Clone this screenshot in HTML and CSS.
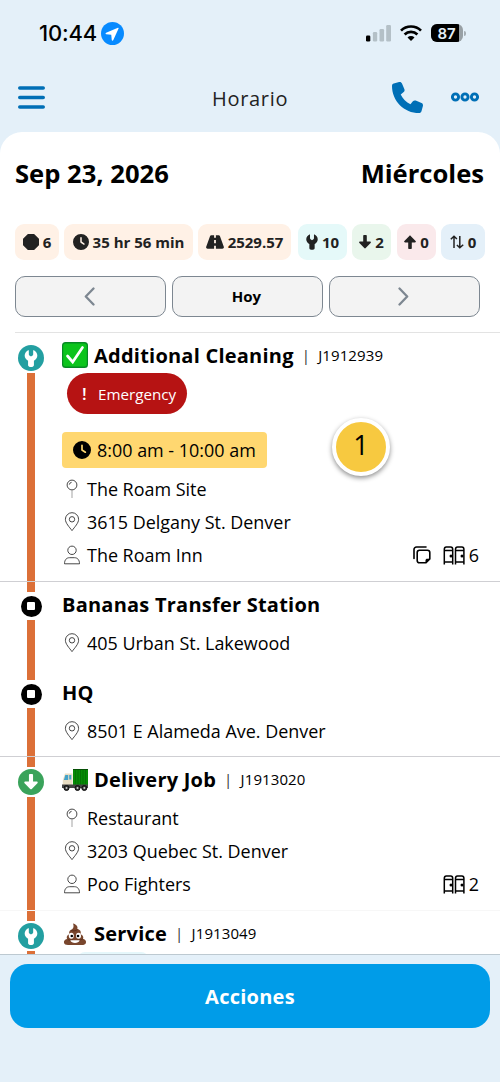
FILE: index.html
```html
<!DOCTYPE html>
<html lang="es">
<head>
<meta charset="utf-8">
<meta name="viewport" content="width=device-width, initial-scale=1">
<title>Horario</title>
<link rel="stylesheet" href="styles.css">
</head>
<body>
<svg class="defs" aria-hidden="true">
  <symbol id="clock" viewBox="0 0 512 512"><path d="M256 0a256 256 0 1 1 0 512A256 256 0 1 1 256 0zM232 120V256c0 8 4 15.5 10.7 20l96 64c11 7.4 25.9 4.4 33.3-6.7s4.4-25.9-6.7-33.3L280 243.2V120c0-13.3-10.7-24-24-24s-24 10.7-24 24z"/></symbol>
  <symbol id="wrench" viewBox="0 0 14 18"><path d="M4.700.6v4c0 .5.2.9.6 1.200l1.700 1.200 1.700-1.200c.4-.3.6-.7.6-1.200V.6c0-.4.4-.6.8-.3C12.200 1.500 13.700 3.500 13.700 5.800c0 2.400-1.500 4.500-3.600 5.500v4.700c0 1.100-.9 2-2 2H5.900c-1.100 0-2-.9-2-2v-4.700C1.800 10.300.3 8.200.3 5.800.3 3.500 1.800 1.500 3.900.3c.4-.3.8-.1.8.3z"/></symbol>
  <symbol id="arrow" viewBox="0 0 12 14"><path d="M4.200 1c0-.6.4-1 1-1h1.600c.6 0 1 .4 1 1v5.500h3.100c.9 0 1.300 1 .7 1.600l-4.900 5c-.4.4-1 .4-1.400 0l-4.900-5C-.2 7.500.2 6.500 1.100 6.500h3.100z"/></symbol>
  <symbol id="pushpin" viewBox="0 0 16 20"><g fill="none" stroke="#333" stroke-width=".9"><circle cx="8" cy="6" r="4.900"/><path d="M5.300 5.600A2.700 2.700 0 0 1 7.600 3.300"/><path d="M8 11v8" stroke="#999"/></g></symbol>
  <symbol id="marker" viewBox="0 0 16 20"><g fill="none" stroke="#333" stroke-width=".9"><path d="M8 18.600C5.300 15 1.400 11 1.400 7.300a6.600 6.600 0 0 1 13.200 0C14.600 11 10.700 15 8 18.600z"/><circle cx="8" cy="7.300" r="2.700"/></g></symbol>
  <symbol id="person" viewBox="0 0 16 20"><g fill="none" stroke="#333" stroke-width=".9"><circle cx="8" cy="5.300" r="4.200"/><path d="M.5 18.800c0-3.900 2-6.100 5-6.100h5c3 0 5 2.200 5 6.100z"/></g></symbol>
  <symbol id="doors" viewBox="0 0 22 19"><g fill="none" stroke="#000" stroke-width="1.500"><path d="M1.300 18.500V3.200c0-1.500.8-2.300 2-2.300h4.400c1.200 0 2 .8 2 2.300v15.300M1.300 4.600h8.400M1.300 16h8.400M12.500 18.500V3.200c0-1.500.8-2.300 2-2.300h4.400c1.200 0 2 .8 2 2.300v15.300M12.500 4.600h8.400M12.500 16h8.400"/></g><circle cx="8" cy="10" r="1.500"/><circle cx="19" cy="10" r="1.500"/></symbol>
  <symbol id="stack" viewBox="0 0 18 18"><g fill="none" stroke="#000" stroke-width="1.600" stroke-linecap="round"><path d="M1 12.500V3.500A2.500 2.500 0 0 1 3.500 1h9.500"/><path d="M6.500 4.200h8A2.300 2.300 0 0 1 16.800 6.500v6.300L13 16.700H6.500a2.300 2.300 0 0 1-2.300-2.300V6.500a2.300 2.300 0 0 1 2.300-2.300z"/></g><path d="M12.500 17v-2.600c0-1 .7-1.700 1.700-1.700H17z"/></symbol>
</svg>

<div class="screen">
  <div class="status">
    <span class="status-time">10:44</span>
    <svg class="status-location" viewBox="0 0 22 22"><circle cx="11" cy="11" r="11" fill="#078aff"/><path d="M16.200 5.500 4.900 10.300c-.8.4-.7 1.400.1 1.500l4.800.5.500 4.900c.1.800 1.100.9 1.500.1L16.800 6.200c.2-.5-.1-.9-.6-.7z" fill="#fff"/></svg>
    <svg class="status-signal" viewBox="0 0 25 17"><rect y="10.500" width="4.300" height="6" rx="1.200"/><g fill="#b4c0c7"><rect x="6.900" y="7" width="4.300" height="9.500" rx="1.200"/><rect x="13.500" y="4" width="4.600" height="12.500" rx="1.200"/><rect x="20.200" y="0" width="4.800" height="16.500" rx="1.200"/></g></svg>
    <svg class="status-wifi" viewBox="0 0 22 16"><g fill="none" stroke="#000" stroke-width="2.700"><path d="M1 5.600a14.300 14.300 0 0 1 20 0"/><path d="M4.600 9.500a9.200 9.200 0 0 1 12.800 0"/></g><path d="M11 16 7.500 12.500a5 5 0 0 1 7 0z"/></svg>
    <div class="battery"><span class="battery-level">87</span></div>
    <span class="battery-tip"></span>
  </div>

  <header class="header">
    <svg class="menu" viewBox="0 0 27 23" stroke="#006fb6" stroke-width="3.600" stroke-linecap="round"><path d="M1.800 2h23.400M1.800 11.500h23.400M1.800 21h23.400"/></svg>
    <h1 class="header-title">Horario</h1>
    <svg class="phone" viewBox="0 0 512 512" fill="#006fb6"><path d="M164.900 24.600c-7.700-18.600-28-28.500-47.400-23.200l-88 24C12.100 30.200 0 46 0 64C0 311.400 200.600 512 448 512c18 0 33.800-12.100 38.600-29.500l24-88c5.300-19.400-4.600-39.700-23.200-47.400l-96-40c-16.300-6.800-35.200-2.100-46.300 11.600L304.700 368C234.300 334.700 177.300 277.700 144 207.300L193.300 167c13.700-11.200 18.400-30 11.600-46.300l-40-96z"/></svg>
    <svg class="more" viewBox="0 0 28 10" fill="none" stroke="#006fb6" stroke-width="2.900"><circle cx="4.500" cy="5" r="3.100"/><circle cx="14" cy="5" r="3.100"/><circle cx="23.500" cy="5" r="3.100"/></svg>
  </header>

  <main class="sheet">
    <div class="date"><span>Sep 23, 2026</span><span>Miércoles</span></div>

    <div class="chips">
      <div class="chip chip-stops"><svg class="ico16" viewBox="0 0 16 16"><path d="M5.300 1h5.400L15 5.300v5.400L10.700 15H5.300L1 10.700V5.300z" stroke="#222" stroke-width="2" stroke-linejoin="round"/></svg>6</div>
      <div class="chip chip-time"><svg class="ico16"><use href="#clock"/></svg>35 hr 56 min</div>
      <div class="chip chip-miles"><svg class="ico-road" viewBox="0 0 18 14"><path d="M5.300.3H8.100V2.800h1.800V.3h2.800c.6 0 1 .3 1.200.8l3.900 10.600c.4 1.100-.3 2.100-1.400 2.100H9.900v-3H8.100v3H1.600C.5 13.800-.2 12.800.2 11.700L4.100 1.100C4.300.6 4.700.3 5.300.3zM8.100 5v3.300h1.800V5z" fill-rule="evenodd"/></svg>2529.57</div>
      <div class="chip chip-service"><svg class="ico-wrench"><use href="#wrench"/></svg>10</div>
      <div class="chip chip-drop"><svg class="ico-arrow"><use href="#arrow"/></svg>2</div>
      <div class="chip chip-pick"><svg class="ico-arrow up"><use href="#arrow"/></svg>0</div>
      <div class="chip chip-swap"><svg class="ico-swap" viewBox="0 0 14 14" fill="none" stroke="#222" stroke-width="1.500"><path d="M4 13V1.500M.8 4.300 4 1.200l2.900 2.800M9.800 1v11.500M6.900 10l2.900 2.800L13.200 9.700"/></svg>0</div>
    </div>

    <div class="pager">
      <button class="pager-btn"><svg class="chev" viewBox="0 0 11 19"><path d="M9.500 1.500 1.800 9.500l7.700 8"/></svg></button>
      <button class="pager-btn">Hoy</button>
      <button class="pager-btn"><svg class="chev" viewBox="0 0 11 19"><path d="m1.500 1.500 7.700 8-7.700 8"/></svg></button>
    </div>

    <section class="stops">
      <article class="stop stop-ruled">
        <div class="rail"><i class="lead lead-first"></i><span class="node node-big"><span class="disc teal"><svg class="disc-wrench"><use href="#wrench"/></svg></span></span><i class="track"></i></div>
        <div class="body">
          <h2 class="title"><svg class="emoji" viewBox="0 0 26 26"><rect width="26" height="26" rx="3.500" fill="#078a24"/><rect x="1.200" y="1.500" width="23.600" height="23" rx="2.500" fill="#0cc41c"/><path d="m5.500 14 5.200 6L20.500 5.500" fill="none" stroke="#fff" stroke-width="2.700" stroke-linecap="round"/></svg>Additional Cleaning<span class="bar">|</span><span class="code">J1912939</span></h2>
          <div class="emergency"><b class="bang">!</b>Emergency</div>
          <div class="window"><svg class="ico18"><use href="#clock"/></svg>8:00 am - 10:00 am</div>
          <p class="line"><svg class="line-ico"><use href="#pushpin"/></svg>The Roam Site</p>
          <p class="line"><svg class="line-ico"><use href="#marker"/></svg>3615 Delgany St. Denver</p>
          <p class="line"><svg class="line-ico"><use href="#person"/></svg>The Roam Inn<span class="units"><svg class="stack"><use href="#stack"/></svg><svg class="doors"><use href="#doors"/></svg>6</span></p>
        </div>
      </article>

      <article class="stop stop-open">
        <div class="rail"><i class="lead"></i><span class="node"><span class="disc stopdot"></span></span><i class="track"></i></div>
        <div class="body">
          <h2 class="title">Bananas Transfer Station</h2>
          <p class="line after-title"><svg class="line-ico"><use href="#marker"/></svg>405 Urban St. Lakewood</p>
        </div>
      </article>

      <article class="stop stop-ruled stop-hq">
        <div class="rail"><i class="lead"></i><span class="node"><span class="disc stopdot"></span></span><i class="track"></i></div>
        <div class="body">
          <h2 class="title">HQ</h2>
          <p class="line after-title"><svg class="line-ico"><use href="#marker"/></svg>8501 E Alameda Ave. Denver</p>
        </div>
      </article>

      <article class="stop stop-faint">
        <div class="rail"><i class="lead"></i><span class="node node-big"><span class="disc green"><svg class="disc-arrow"><use href="#arrow"/></svg></span></span><i class="track"></i></div>
        <div class="body">
          <h2 class="title"><svg class="emoji truck" viewBox="0 0 26 26"><path d="M11 2h15v16H11z" fill="#068b06"/><path d="M11 2h15v1H11z" fill="#054f05"/><path d="M13.500 3v15M16 3v15M18.500 3v15M21 3v15M23.500 3v15" stroke="#056a05" stroke-width=".7"/><path d="M3 6.500h7.500V19H.8v-6z" fill="#e9dec4"/><path d="M3.300 8h2.900v5H1.900zM7.200 8h2.100v4.500H7.200z" fill="#43a2c9"/><path d="M0 17.500h26V21H0z" fill="#444"/><g fill="#333" stroke="#111"><circle cx="4.500" cy="21" r="2.500"/><circle cx="15.500" cy="21" r="2.500"/><circle cx="22.300" cy="21" r="2.500"/></g><g fill="#ccc"><circle cx="4.500" cy="21" r="1"/><circle cx="15.500" cy="21" r="1"/><circle cx="22.300" cy="21" r="1"/></g></svg>Delivery Job<span class="bar">|</span><span class="code">J1913020</span></h2>
          <p class="line after-title"><svg class="line-ico"><use href="#pushpin"/></svg>Restaurant</p>
          <p class="line"><svg class="line-ico"><use href="#marker"/></svg>3203 Quebec St. Denver</p>
          <p class="line"><svg class="line-ico"><use href="#person"/></svg>Poo Fighters<span class="units"><svg class="doors"><use href="#doors"/></svg>2</span></p>
        </div>
      </article>

      <article class="stop stop-last">
        <div class="rail"><i class="lead"></i><span class="node node-big"><span class="disc teal"><svg class="disc-wrench"><use href="#wrench"/></svg></span></span><i class="track"></i></div>
        <div class="body">
          <h2 class="title"><svg class="emoji poo" viewBox="0 0 26 26"><path d="M11 2.500c3 .8 5.300 3 4.300 5.500 2.800.5 4.200 2.600 3.200 5.200 2.500.8 3.400 2.700 2.500 4.600 2.500.8 3.500 2.500 2.900 4.200-.5 1.600-2 2-4 2H6c-2.300 0-3.700-.7-4-2.200-.4-1.800.8-3.300 3-3.900-.8-2.400.2-4.100 2.400-4.700-.8-2.500.4-4.200 2.700-5C11.600 7.500 12 5 11 2.500z" fill="#79462d"/><path d="M9 9.500c3 .8 5 .2 6.500-1M6 18.700c2 .7 3.500.5 5 0M15 19c2.500.3 4.500-.3 6-1.200" fill="none" stroke="#552b19" stroke-width=".8"/><g fill="#fff"><ellipse cx="9.300" cy="14.800" rx="2.500" ry="3"/><ellipse cx="16.500" cy="14.800" rx="2.500" ry="3"/><path d="M8.300 19.300h9.400c-1 3.500-8.400 3.500-9.400 0z"/></g><circle cx="9.800" cy="15" r="1.300"/><circle cx="16" cy="15" r="1.300"/></svg>Service<span class="bar">|</span><span class="code">J1913049</span></h2>
          <div class="peek"></div>
        </div>
      </article>
    </section>
  </main>

  <footer class="footer"><button class="action">Acciones</button></footer>
  <div class="pointer">1</div>
</div>
</body>
</html>
```

FILE: styles.css
```css
* { box-sizing: border-box; }
body {
  margin: 0;
  background: #e4f0f9;
  color: #000;
  font-family: "Open Sans", "Noto Sans", sans-serif;
}
svg { display: block; flex: none; }
h1, h2, p { margin: 0; font-weight: 400; }
button { font: inherit; margin: 0; padding: 0; }
.defs { position: absolute; width: 0; height: 0; }

.screen {
  position: relative;
  width: 500px;
  height: 1082px;
  overflow: hidden;
  display: flex;
  flex-direction: column;
}

/* Status bar */
.status {
  height: 66px;
  flex: none;
  padding-left: 39px;
  display: flex;
  align-items: center;
}
.status-time {
  width: 62px;
  font: 500 22px/30px Inter, sans-serif;
  letter-spacing: -.2px;
  white-space: nowrap;
}
.status-location { width: 23px; height: 23px; }
.status-signal { width: 25px; height: 17px; margin-left: 242px; }
.status-wifi { width: 22px; height: 16px; margin-left: 9px; }
.battery {
  width: 32px;
  height: 18px;
  margin-left: 9px;
  border-radius: 6px;
  overflow: hidden;
  background: #98a0a5;
}
.battery-level {
  display: block;
  width: 28px;
  padding-left: 3px;
  background: #000;
  color: #e4f0f9;
  font: 600 15px/19px Inter, sans-serif;
  letter-spacing: -.2px;
  text-align: center;
}
.battery-tip { width: 2px; height: 5px; margin-left: 1px; border-radius: 0 2px 2px 0; background: #a4adb3; }

/* Header */
.header {
  height: 66px;
  flex: none;
  padding: 0 20px 0 18px;
  display: flex;
  align-items: center;
}
.menu { width: 27px; height: 23px; margin-top: -3px; }
.header-title {
  width: 76px;
  margin-left: 167px;
  font-size: 20px;
  line-height: 28px;
  letter-spacing: .7px;
  color: #222;
}
.phone { width: 31px; height: 31px; margin-left: 104px; margin-top: -3px; }
.more { width: 28px; height: 10px; margin-left: 28px; margin-top: -5px; }

/* Sheet */
.sheet {
  height: 823px;
  flex: none;
  overflow: hidden;
  background: #fff;
  border-radius: 22px 22px 0 0;
  border-bottom: 1px solid #bdc9d1;
}
.date {
  height: 92px;
  padding: 25px 16px 0 15px;
  display: flex;
  justify-content: space-between;
  font-size: 25.600px;
  font-weight: 700;
  line-height: 34px;
}
.chips { display: flex; padding-left: 15px; }
.chip {
  height: 36px;
  display: flex;
  align-items: center;
  justify-content: center;
  gap: 4px;
  border-radius: 9px;
  background: #fff1e6;
  color: #222;
  fill: #222;
  font-size: 15px;
  font-weight: 700;
  white-space: nowrap;
}
.chip svg { margin-top: -1px; }
.chip-stops { width: 44px; }
.chip-time { width: 129px; margin-left: 5px; }
.chip-miles { width: 93px; margin-left: 5px; }
.chip-service { width: 49px; margin-left: 7px; background: #e5f9f9; }
.chip-drop { width: 39px; margin-left: 5px; background: #e9f6ec; }
.chip-pick { width: 39px; margin-left: 6px; background: #fae9eb; }
.chip-swap { width: 44px; margin-left: 5px; background: #e4f0f9; }
.ico16 { width: 16px; height: 16px; }
.ico18 { width: 18px; height: 18px; }
.ico-road { width: 18px; height: 14px; }
.ico-wrench { width: 12px; height: 16px; }
.ico-arrow { width: 12px; height: 14px; }
.ico-swap { width: 14px; height: 14px; }
.up { transform: rotate(180deg); }

.pager {
  display: flex;
  gap: 6px;
  padding: 16px 0 15px 15px;
}
.pager-btn {
  width: 151px;
  height: 41px;
  padding: 0 2px 1px 0;
  display: flex;
  align-items: center;
  justify-content: center;
  border: 1.500px solid #7d8791;
  border-radius: 10px;
  background: #f3f3f3;
  color: #000;
  font-size: 15px;
  font-weight: 700;
}
.chev { width: 11px; height: 19px; fill: none; stroke: #7d8791; stroke-width: 2.300px; stroke-linecap: round; stroke-linejoin: round; }

/* Stops */
.stops::before { content: ""; display: block; height: 1px; margin-left: 15px; background: #e3e3e3; }
.stop { display: flex; }
.stop-ruled { height: 249px; border-bottom: 1px solid #cfcfd3; }
.stop-open { height: 88px; }
.stop-hq { height: 87px; }
.stop-faint { height: 154px; border-bottom: 1px solid #f7f7f7; }
.stop-last { height: 60px; }

.rail {
  width: 62px;
  flex: none;
  display: flex;
  flex-direction: column;
  align-items: center;
}
.lead, .track { width: 8px; background: #dc7038; }
.lead { height: 10px; }
.lead-first { background: none; }
.track { flex: 1; }
.node { height: 28px; display: flex; align-items: center; }
.node-big { height: 30px; }
.disc {
  width: 26px;
  height: 26px;
  border-radius: 50%;
  display: flex;
  align-items: center;
  justify-content: center;
  fill: #fff;
}
.teal { background: #239fa1; }
.green { background: #3aa35b; }
.disc-wrench { width: 14px; height: 17px; }
.disc-arrow { width: 14px; height: 16px; }
.stopdot { width: 21px; height: 21px; background: #000; }
.stopdot::before { content: ""; width: 8px; height: 8px; border-radius: 1px; background: #fff; }

.body { flex: 1; padding-top: 5px; }
.title {
  height: 35px;
  padding-bottom: 1px;
  display: flex;
  align-items: center;
  font-size: 20px;
  font-weight: 700;
  letter-spacing: .23px;
  white-space: nowrap;
}
.emoji { width: 26px; height: 26px; margin-right: 6px; }
.truck { margin-top: 2px; }
.poo { margin-top: 2px; }
.bar { margin: 0 8px; font-size: 15px; font-weight: 400; color: #333; }
.code { font-size: 15px; font-weight: 400; letter-spacing: .1px; }
.emergency {
  width: 120px;
  height: 41px;
  margin-left: 5px;
  display: flex;
  align-items: center;
  border-radius: 21px;
  background: #b61313;
  color: #fff;
  font-size: 15.200px;
}
.bang { width: 16px; margin-left: 15px; font-size: 17px; font-weight: 600; }
.window {
  width: 205px;
  height: 36px;
  margin: 18px 0 4px;
  padding-left: 11px;
  display: flex;
  align-items: center;
  gap: 6px;
  border-radius: 4px;
  background: #ffd770;
  font-size: 17.950px;
}
.line {
  height: 33.300px;
  padding-right: 21px;
  display: flex;
  align-items: center;
  font-size: 17.950px;
  white-space: nowrap;
}
.after-title { margin-top: 4px; }
.line-ico { width: 16px; height: 20px; margin: 0 7px 0 2px; }
.units { margin-left: auto; display: flex; align-items: center; }
.stack { width: 18px; height: 18px; margin-right: 12px; }
.doors { width: 22px; height: 19px; margin-right: 4px; }
.peek { width: 72px; height: 20px; margin: 1px 0 0 15px; border-radius: 8px; background: #e5f7fb; }

/* Footer */
.footer { padding: 9px 10px 0; }
.action {
  width: 480px;
  height: 64px;
  border: 0;
  border-radius: 18px;
  background: #009ce8;
  color: #fff;
  font-size: 20px;
  font-weight: 700;
  letter-spacing: .25px;
}

/* Numbered callout over the list */
.pointer {
  position: absolute;
  left: 332px;
  top: 418px;
  width: 58px;
  height: 58px;
  border: 4px solid #fff;
  border-radius: 50%;
  background: #f7c940;
  box-shadow: 0 2px 5px rgba(0, 0, 0, .45);
  font: 27px/45px "Open Sans", "Noto Sans", sans-serif;
  text-align: center;
}
```
